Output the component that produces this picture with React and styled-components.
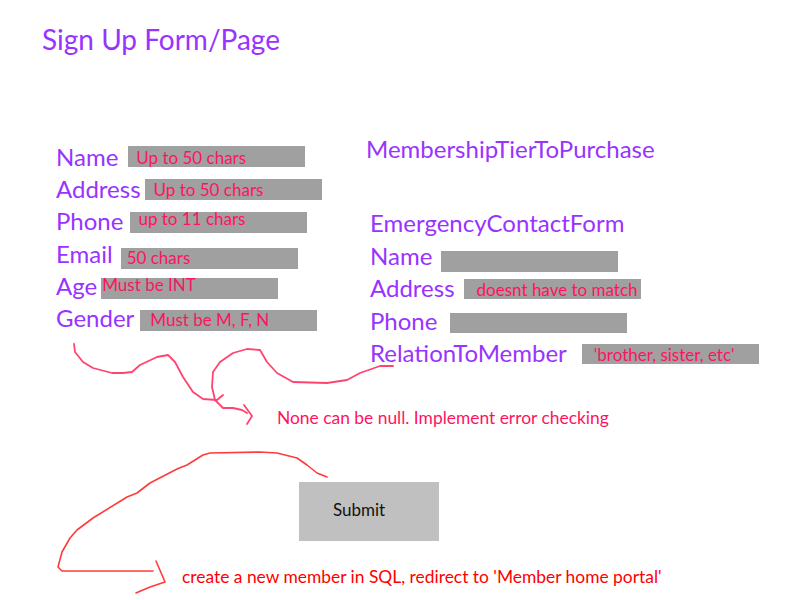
import React from "react";
import styled, { createGlobalStyle } from "styled-components";

const Global = createGlobalStyle`
  html, body { margin: 0; padding: 0; background: #ffffff; }
  body { font-family: Lato, "Open Sans", sans-serif; }
`;

const PURPLE = "#9933ff";
const PINK = "#ff1361";

const Page = styled.div`
  position: relative;
  width: 800px;
  height: 600px;
  overflow: hidden;
  background: #ffffff;
  font-family: Lato, "Open Sans", sans-serif;
  display: flex;
  flex-direction: column;
`;

const Title = styled.h1`
  margin: 21.5px 0 0 42px;
  font-size: 28px;
  line-height: 34px;
  font-weight: 400;
  color: ${PURPLE};
`;

const Columns = styled.div`
  display: flex;
  margin-top: 77px;
  padding-left: 56px;
`;

const Column = styled.div`
  display: flex;
  flex-direction: column;
  width: ${(p) => p.$w}px;
  padding-top: ${(p) => p.$pt || 0}px;
`;

const Row = styled.div`
  display: flex;
  align-items: flex-start;
  height: 32.4px;
  padding-left: ${(p) => p.$indent || 0}px;
  margin-top: ${(p) => p.$mt || 0}px;
`;

const Label = styled.span`
  font-size: 24px;
  line-height: 32.4px;
  color: ${PURPLE};
  white-space: nowrap;
`;

const Field = styled.div`
  flex: none;
  box-sizing: border-box;
  width: 177px;
  height: ${(p) => p.$h || 21}px;
  margin-left: ${(p) => p.$gap}px;
  margin-top: ${(p) => p.$top}px;
  padding-left: ${(p) => p.$px || 0}px;
  padding-top: ${(p) => p.$ty || 0}px;
  background: #a0a0a0;
  color: ${PINK};
  font-size: 17px;
  line-height: 12px;
  white-space: nowrap;
`;

const Note = styled.p`
  margin: ${(p) => p.$mt}px 0 0 ${(p) => p.$ml}px;
  font-size: 17.4px;
  line-height: 22px;
  color: ${(p) => p.$color};
  white-space: nowrap;
`;

const SubmitButton = styled.button`
  display: flex;
  align-items: center;
  box-sizing: border-box;
  width: 140px;
  height: 59px;
  margin: 52.7px 0 0 299px;
  padding: 0 0 4px 34px;
  border: none;
  background: #c0c0c0;
  color: #111111;
  font-family: Lato, "Open Sans", sans-serif;
  font-size: 17px;
`;

const Scribbles = styled.svg`
  position: absolute;
  left: 0;
  top: 0;
  pointer-events: none;
`;

const Stroke = styled.polyline`
  fill: none;
  stroke: ${(p) => p.$color};
  stroke-width: ${(p) => p.$w || 1.8};
  stroke-linecap: round;
  stroke-linejoin: round;
`;

const leftFields = [
  { label: "Name", gap: 10, top: 5.5, px: 8, ty: 6.4, hint: "Up to 50 chars" },
  { label: "Address", gap: 4, top: 6.1, px: 9, ty: 5.1, hint: "Up to 50 chars" },
  { label: "Phone", gap: 7, top: 6.7, px: 8, ty: 1.1, hint: "up to 11 chars" },
  { label: "Email", gap: 8, top: 10.3, px: 6, ty: 4.4, hint: "50 chars" },
  { label: "Age", gap: 4, top: 7.9, px: 1, ty: 1.4, hint: "Must be INT" },
  { label: "Gender", gap: 6, top: 7.5, px: 10, ty: 4.4, hint: "Must be M, F, N" },
];

const rightFields = [
  { label: "Name", gap: 9, top: 10.7, h: 21 },
  { label: "Address", gap: 9, top: 6.3, h: 20, px: 13, ty: 5.4, hint: "doesnt have to match" },
  { label: "Phone", gap: 13, top: 7.9, h: 20 },
  { label: "RelationToMember", gap: 15, top: 6.5, h: 20, px: 12, ty: 5.4, hint: "'brother, sister, etc'" },
];

const curveA =
  "74,344 75,352 83,362 93,368 112,373 123,373 132,372 140,365 157,357 168,355 175,362 183,377 193,392 203,399 217,400 223,395";
const curveB =
  "393,366 380,366 360,373 347,380 327,383 293,382 277,373 267,362 260,350 247,349 233,353 220,362 213,372 212,387 215,400 223,408 233,408 242,410 247,413";
const arrowB = "244,405 252,416 247,424";
const curveC =
  "327,477 317,473 307,465 297,458 277,453 260,452 210,453 203,455 187,465 177,469 150,483 137,493 127,497 93,518 77,530 70,538 62,552 58,567 62,571 153,571";
const arrowC = "156,561 165,582 150,587 136,593";

export default function App() {
  return (
    <>
      <Global />
      <Page>
        <Title>Sign Up Form/Page</Title>
        <Columns>
          <Column $w={310} $pt={8}>
            {leftFields.map((f) => (
              <Row key={f.label}>
                <Label>{f.label}</Label>
                <Field $gap={f.gap} $top={f.top} $px={f.px} $ty={f.ty}>
                  {f.hint}
                </Field>
              </Row>
            ))}
          </Column>
          <Column $w={420}>
            <Row>
              <Label>MembershipTierToPurchase</Label>
            </Row>
            <Row $indent={4} $mt={42.6}>
              <Label>EmergencyContactForm</Label>
            </Row>
            {rightFields.map((f) => (
              <Row key={f.label} $indent={4}>
                <Label>{f.label}</Label>
                <Field $gap={f.gap} $top={f.top} $h={f.h} $px={f.px} $ty={f.ty}>
                  {f.hint}
                </Field>
              </Row>
            ))}
          </Column>
        </Columns>
        <Note $mt={37.8} $ml={277} $color={PINK}>
          None can be null. Implement error checking
        </Note>
        <SubmitButton type="button">Submit</SubmitButton>
        <Note $mt={25.3} $ml={182} $color="#ff0000">
          create a new member in SQL, redirect to 'Member home portal'
        </Note>
        <Scribbles width="800" height="600" viewBox="0 0 800 600">
          <Stroke points={curveA} $color="#ff4470" />
          <Stroke points={curveB} $color="#ff4470" />
          <Stroke points={arrowB} $color="#ff4470" />
          <Stroke points={curveC} $color="#ff3b3b" $w={1.6} />
          <Stroke points={arrowC} $color="#ff3b3b" $w={1.6} />
        </Scribbles>
      </Page>
    </>
  );
}
